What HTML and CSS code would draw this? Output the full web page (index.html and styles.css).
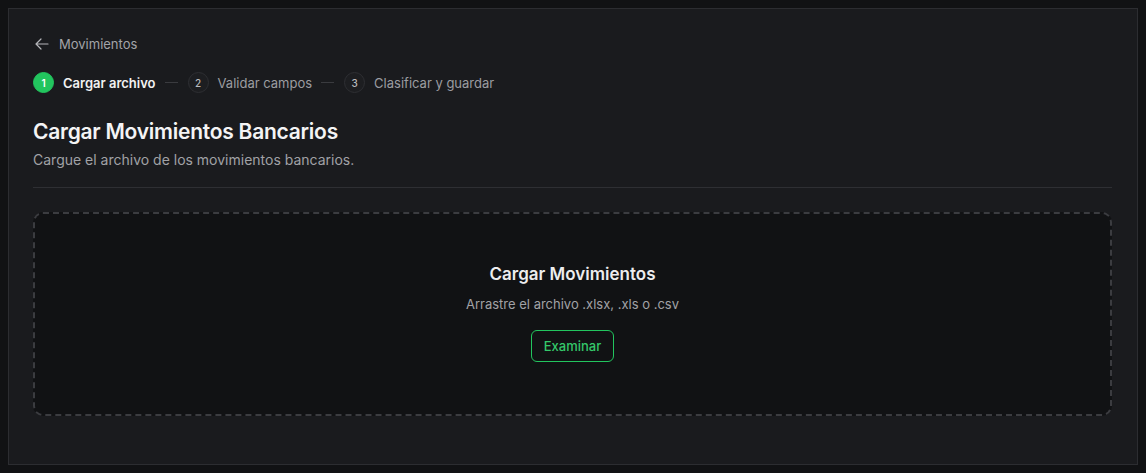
FILE: index.html
```html
<!DOCTYPE html>
<html lang="es">
<head>
<meta charset="utf-8">
<title>Cargar Movimientos</title>
<link rel="stylesheet" href="styles.css">
</head>
<body>
<main class="card">
  <a class="back" href="#">
    <svg class="back-icon" width="16" height="16" viewBox="0 0 24 24" fill="none" stroke="currentColor" stroke-width="1.8" stroke-linecap="round" stroke-linejoin="round"><path d="M10.5 19.5 3 12m0 0 7.5-7.5M3 12h18"/></svg>
    <span>Movimientos</span>
  </a>
  <ol class="steps">
    <li class="step active"><span class="num">1</span><span class="label">Cargar archivo</span></li>
    <li class="sep"></li>
    <li class="step"><span class="num">2</span><span class="label">Validar campos</span></li>
    <li class="sep"></li>
    <li class="step"><span class="num">3</span><span class="label">Clasificar y guardar</span></li>
  </ol>
  <header class="head">
    <h1 class="title">Cargar Movimientos Bancarios</h1>
    <p class="subtitle">Cargue el archivo de los movimientos bancarios.</p>
  </header>
  <section class="drop">
    <h2 class="drop-title">Cargar Movimientos</h2>
    <p class="drop-text">Arrastre el archivo .xlsx, .xls o .csv</p>
    <button class="btn" type="button">Examinar</button>
  </section>
</main>
</body>
</html>
```
FILE: styles.css
```css
* { box-sizing: border-box; }
html, body { height: 100%; }
body {
  margin: 0;
  padding: 8px;
  background: #111214;
  font-family: Inter, "Noto Sans", sans-serif;
  color: #ececec;
}
.card {
  background: #1a1b1e;
  border: 1px solid #2c2d31;
  height: 457px;
  padding: 25px 25px 24px 24px;
  display: flex;
  flex-direction: column;
}
.back {
  display: flex;
  align-items: center;
  gap: 9px;
  color: #a3a4a8;
  text-decoration: none;
  font-size: 13px;
  line-height: 20px;
  height: 20px;
}
.back-icon { color: #b5b6ba; margin-left: 1px; }
.steps {
  list-style: none;
  margin: 18px 0 0;
  padding: 0;
  display: flex;
  align-items: center;
  gap: 9px;
  height: 21px;
}
.step {
  display: flex;
  align-items: center;
  gap: 9px;
  font-size: 13px;
  color: #9c9da1;
}
.num {
  width: 21px;
  height: 21px;
  border-radius: 50%;
  border: 1px solid #2e2f33;
  background: #1d1e21;
  display: flex;
  align-items: center;
  justify-content: center;
  font-size: 10px;
  font-weight: 500;
  color: #b9babd;
}
.step.active .num {
  background: #22c55e;
  border-color: #22c55e;
  color: #ffffff;
  font-weight: 600;
}
.step.active .label {
  color: #f2f2f2;
  font-weight: 600;
}
.sep {
  width: 13px;
  height: 1px;
  margin-right: 1px;
  background: #3a3b3f;
}
.head {
  margin-top: 25px;
  padding-bottom: 17px;
  border-bottom: 1px solid #2e2f33;
}
.title {
  margin: 0;
  font-size: 21px;
  line-height: 28px;
  font-weight: 600;
  letter-spacing: -0.25px;
  color: #f4f4f5;
}
.subtitle {
  margin: 4px 0 0;
  font-size: 14px;
  line-height: 20px;
  color: #a1a2a6;
}
.drop {
  margin-top: 24px;
  height: 204px;
  padding-bottom: 7px;
  border: 2px dashed #3b3c40;
  border-radius: 10px;
  background: #111214;
  display: flex;
  flex-direction: column;
  align-items: center;
  justify-content: center;
}
.drop-title {
  margin: 0;
  font-size: 17px;
  line-height: 28px;
  font-weight: 600;
  color: #ededee;
}
.drop-text {
  margin: 6px 0 0;
  font-size: 13px;
  line-height: 20px;
  color: #a1a2a6;
}
.btn {
  margin-top: 16px;
  height: 32px;
  padding: 0 12px;
  border: 1px solid #22c55e;
  border-radius: 6px;
  background: transparent;
  color: #34c86a;
  font-family: inherit;
  font-size: 13px;
  font-weight: 500;
}
```
